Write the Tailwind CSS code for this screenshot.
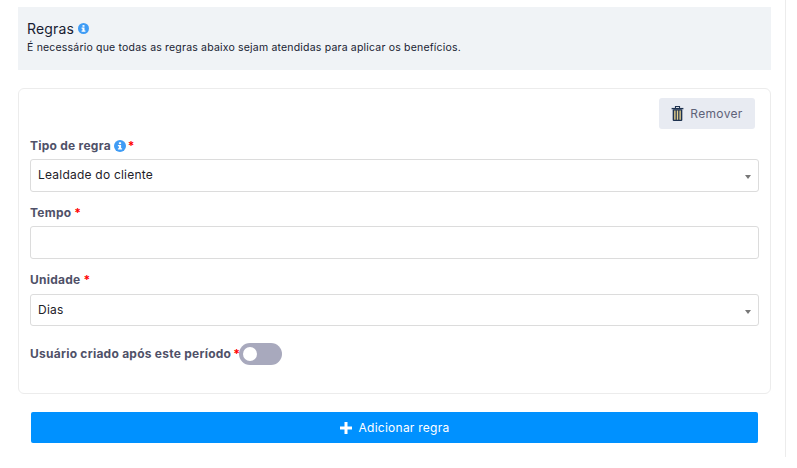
<!DOCTYPE html>
<html lang="pt-BR">
<head>
    <meta charset="UTF-8">
    <meta name="viewport" content="width=device-width, initial-scale=1.0">
    <title>Regras</title>
    <script src="https://cdn.jsdelivr.net/npm/@tailwindcss/browser@4"></script>
</head>
<body class="bg-white font-['Inter',sans-serif] h-[468px] overflow-hidden">
    <div class="w-[786px] h-[457px] border-r border-[#ececec] pt-[7px] pl-[18px] pr-[14px]">
        <!-- cabecalho -->
        <div class="h-[63px] bg-[#f0f3f6] pl-[9px] pt-[13px]">
            <div class="flex items-center gap-[4px] h-[17px]">
                <h2 class="text-[14px] leading-[17px] tracking-[0.15px] text-[#181c32]">Regras</h2>
                <svg class="w-[11px] h-[11px]" viewBox="0 0 12 12"><circle cx="6" cy="6" r="6" fill="#3f9cf5"/><rect x="4.9" y="2.3" width="2.2" height="1.8" fill="#fff"/><path d="M3.9 5h3.2v3.3h1v1.3H3.9V8.3h1V6.2h-1z" fill="#fff"/></svg>
            </div>
            <p class="text-[10.5px] leading-[14px] tracking-[0.19px] mt-[4px] text-[#181c32]">É necessário que todas as regras abaixo sejam atendidas para aplicar os benefícios.</p>
        </div>

        <!-- card da regra -->
        <div class="mt-[18px] h-[306px] border border-[#ececec] rounded-[6px] px-[11px] pt-[9px]">
            <div class="flex justify-end pr-[4px]">
                <button class="w-[96px] h-[31px] bg-[#e8ebf2] rounded-[3px] flex items-center justify-center gap-[6px] text-[12px] tracking-[0.35px] text-[#5e6278]">
                    <svg class="w-[13px] h-[15px]" viewBox="0 0 11 14"><path d="M3.6 1.8V.5h3.8v1.3" fill="none" stroke="#1e3250" stroke-width="1"/><rect x="0" y="1.8" width="11" height="1.3" fill="#1e3250"/><rect x="1" y="3.1" width="9" height="10.9" rx="1" fill="#1e3250"/><path d="M2.4 4.2h1.3v8.6H2.4zM4.85 4.2h1.3v8.6h-1.3zM7.3 4.2h1.3v8.6H7.3z" fill="#e5d08d"/></svg>
                    Remover
                </button>
            </div>

            <label class="flex items-center mt-[9px] h-[16px] text-[12px] tracking-[0.25px] font-bold text-[#4f5168]">
                Tipo de regra
                <svg class="w-[12px] h-[12px] ml-[3px]" viewBox="0 0 12 12"><circle cx="6" cy="6" r="6" fill="#3f9cf5"/><rect x="4.9" y="2.3" width="2.2" height="1.8" fill="#fff"/><path d="M3.9 5h3.2v3.3h1v1.3H3.9V8.3h1V6.2h-1z" fill="#fff"/></svg>
                <span class="ml-[2px] text-[#f00]">*</span>
            </label>
            <div class="relative mt-[5px] h-[33px] border border-[#dcdcdc] rounded-[3px] flex items-center pl-[7px] pb-[1px] text-[12px] tracking-[0.22px] text-[#1e2129]">
                Lealdade do cliente
                <span class="absolute right-[7px] top-[15px] border-x-[3px] border-t-[4px] border-x-transparent border-t-[#777]"></span>
            </div>

            <label class="flex items-center mt-[13px] h-[16px] text-[12px] tracking-[0.25px] font-bold text-[#4f5168]">
                Tempo <span class="ml-[3px] text-[#f00]">*</span>
            </label>
            <div class="mt-[5px] h-[33px] border border-[#dcdcdc] rounded-[3px]"></div>

            <label class="flex items-center mt-[13px] h-[16px] text-[12px] tracking-[0.25px] font-bold text-[#4f5168]">
                Unidade <span class="ml-[3px] text-[#f00]">*</span>
            </label>
            <div class="relative mt-[6px] h-[32px] border border-[#dcdcdc] rounded-[3px] flex items-center pl-[7px] text-[12px] tracking-[0.22px] text-[#1e2129]">
                Dias
                <span class="absolute right-[7px] top-[15px] border-x-[3px] border-t-[4px] border-x-transparent border-t-[#777]"></span>
            </div>

            <div class="flex items-center mt-[17px] h-[22px]">
                <label class="text-[12px] tracking-[0.25px] font-bold text-[#4f5168]">Usuário criado após este período</label>
                <span class="ml-[2px] text-[12px] font-bold text-[#f00]">*</span>
                <span class="-ml-[1px] w-[43px] h-[22px] rounded-full bg-[#a8a9bd] flex items-center pl-[4px]">
                    <span class="w-[14px] h-[14px] rounded-full bg-white"></span>
                </span>
            </div>
        </div>

        <!-- adicionar -->
        <button class="block mt-[18px] ml-[13px] w-[727px] h-[31px] bg-[#0091ff] rounded-[2px] flex items-center justify-center gap-[7px] text-[12px] tracking-[0.25px] text-white">
            <svg class="w-[12px] h-[12px]" viewBox="0 0 12 12"><path d="M4.5 0h3v4.5H12v3H7.5V12h-3V7.5H0v-3h4.5z" fill="#fff"/></svg>
            Adicionar regra
        </button>
    </div>
</body>
</html>
